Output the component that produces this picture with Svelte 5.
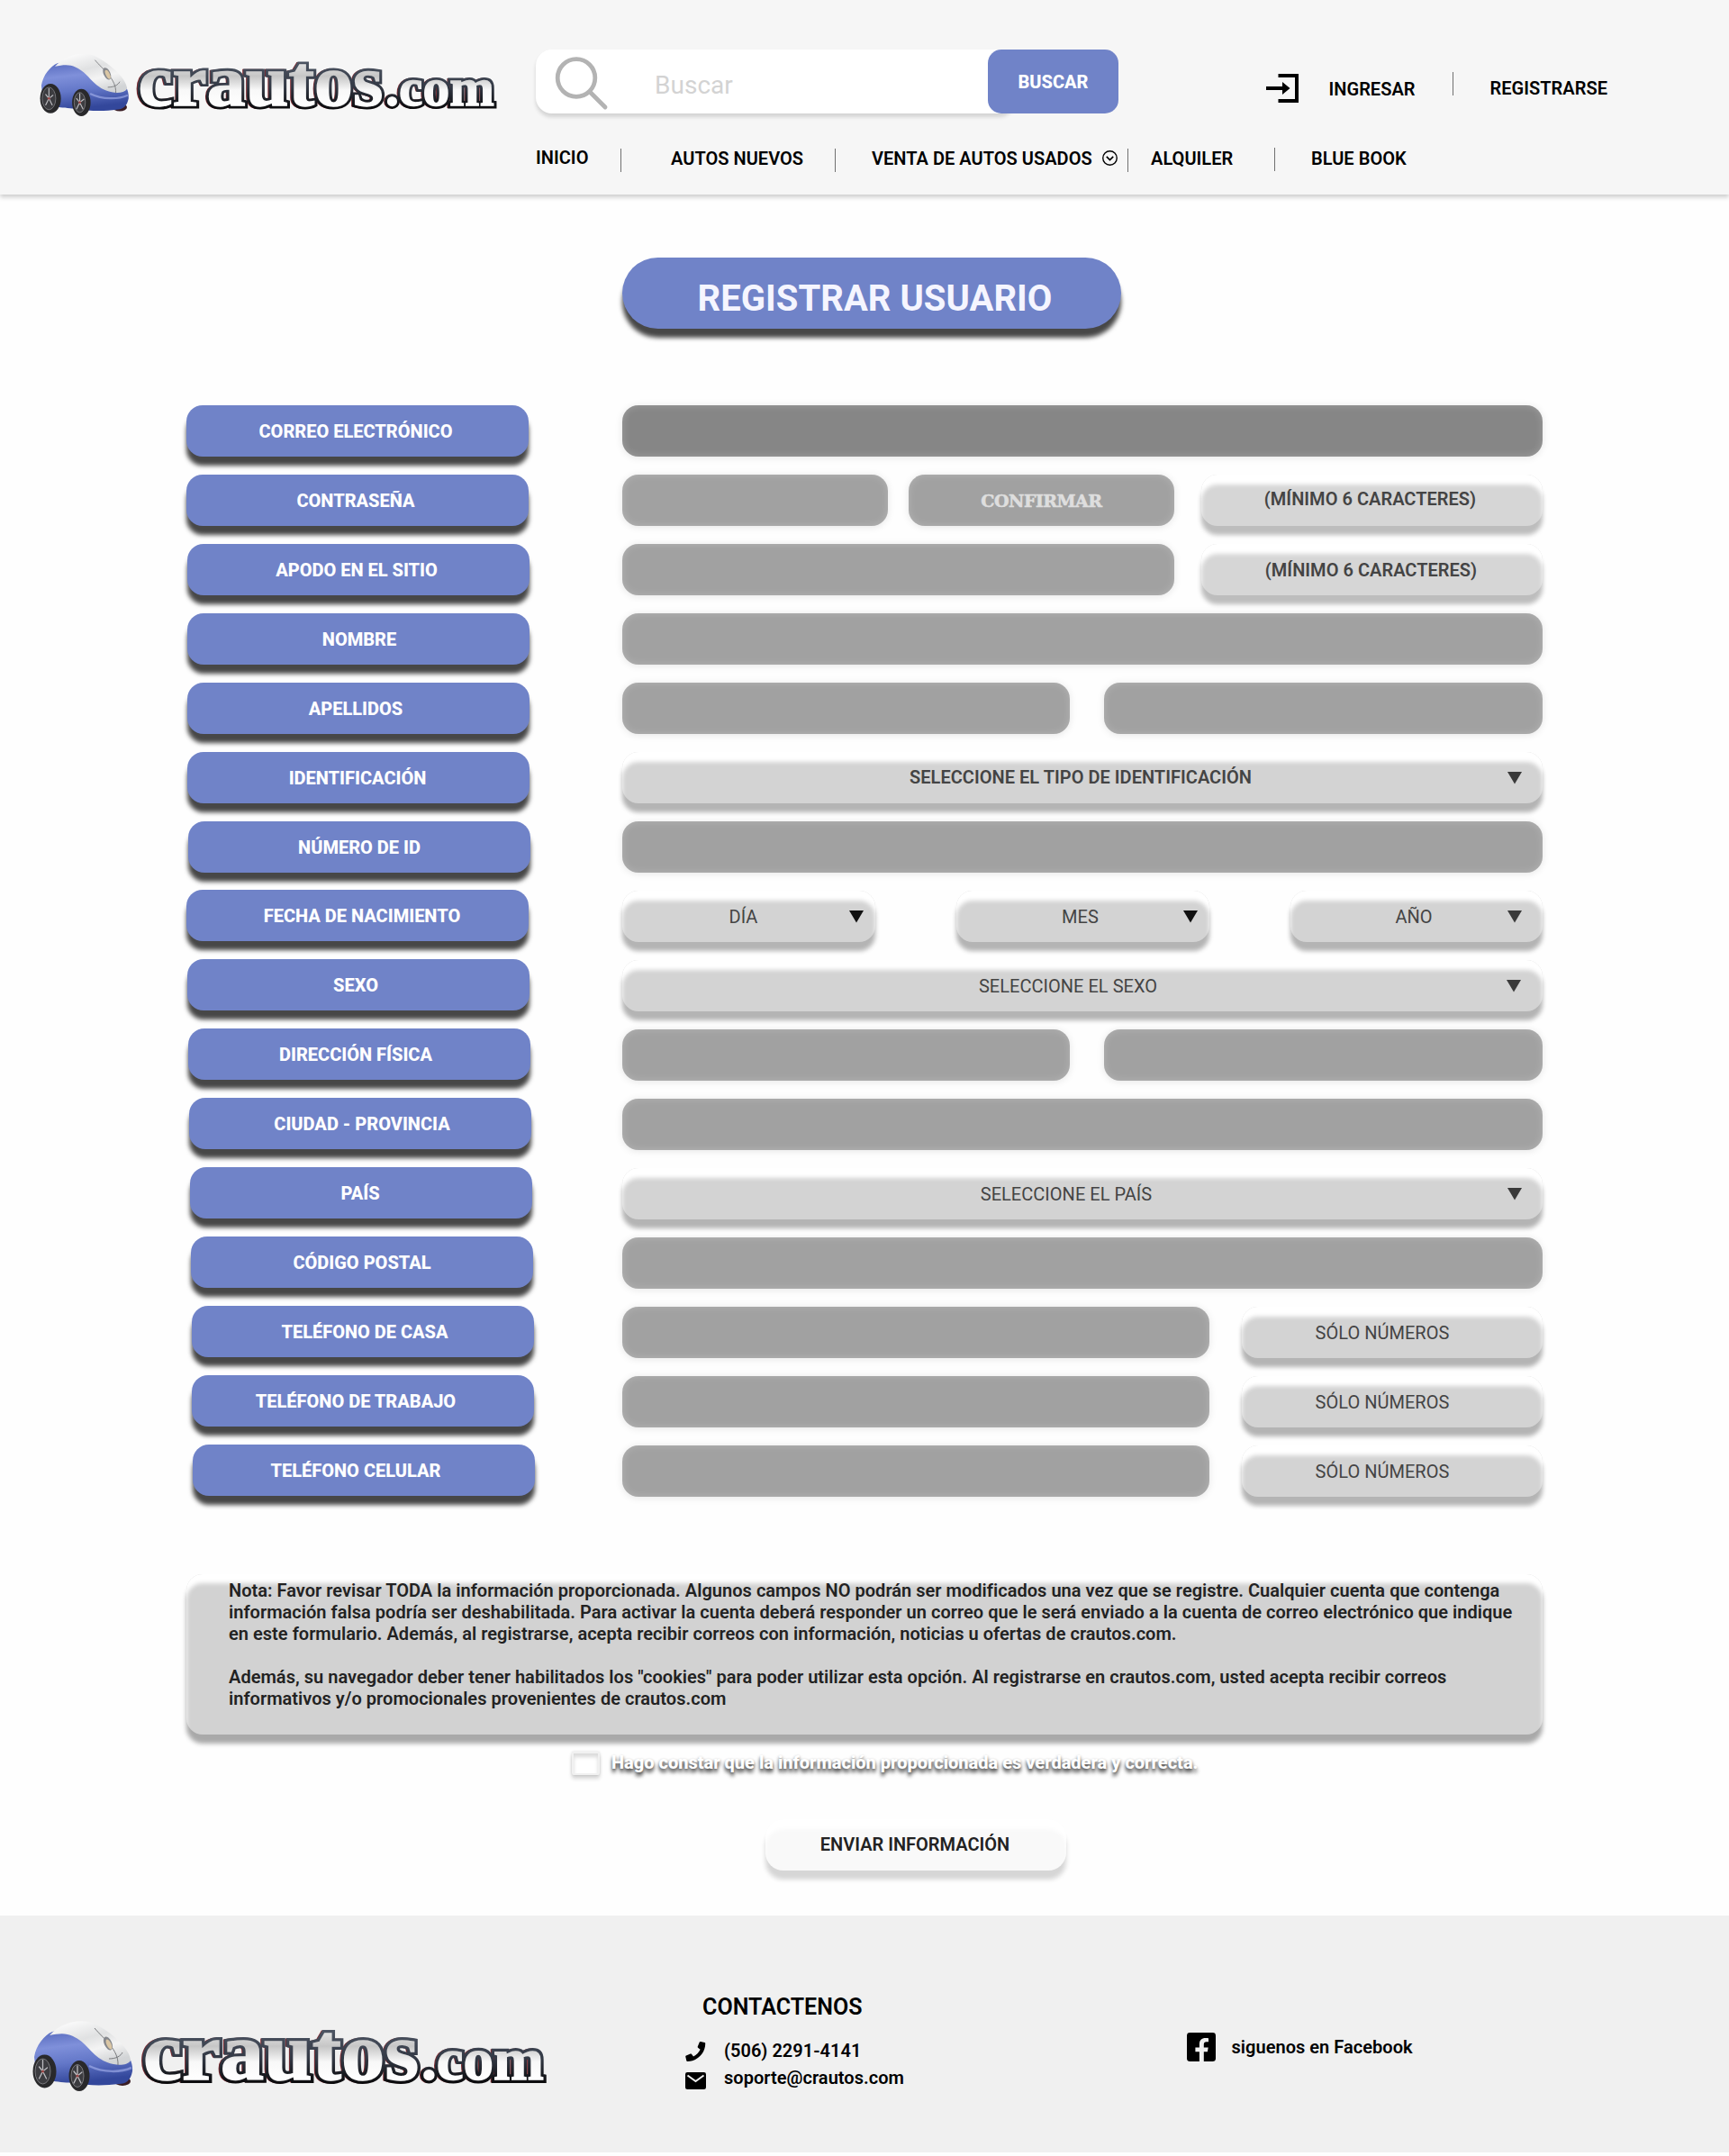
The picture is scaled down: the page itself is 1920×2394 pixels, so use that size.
<script>
  const pass = (gap, w, extra = {}) => ({ kind: 'input', gap, w, ...extra });
  const soft = (gap, w, text, extra = {}) => ({ kind: 'soft', gap, w, text, dx: 0, dy: 0, ...extra });

  const rows = [
    { label: 'CORREO ELECTRÓNICO', x: 0, dx: -2, fields: [pass(0, 1022, { dark: true })] },
    {
      label: 'CONTRASEÑA', x: 0, dx: -2,
      fields: [
        pass(0, 295),
        pass(23, 295, { text: 'CONFIRMAR' }),
        soft(30, 379, '(MÍNIMO 6 CARACTERES)', { dx: -2, dy: -2, strong: true, pale: true })
      ]
    },
    {
      label: 'APODO EN EL SITIO', x: 1, dx: -2,
      fields: [pass(0, 613), soft(30, 379, '(MÍNIMO 6 CARACTERES)', { dx: -1, strong: true, pale: true })]
    },
    { label: 'NOMBRE', x: 1, dx: 1, fields: [pass(0, 1022)] },
    { label: 'APELLIDOS', x: 1, dx: -3, fields: [pass(0, 497), pass(38, 487)] },
    {
      label: 'IDENTIFICACIÓN', x: 1, dx: -1,
      fields: [soft(0, 1022, 'SELECCIONE EL TIPO DE IDENTIFICACIÓN', { dx: -2, dy: -1, strong: true, arrow: 23 })]
    },
    { label: 'NÚMERO DE ID', x: 2, dx: 0, fields: [pass(0, 1022)] },
    {
      label: 'FECHA DE NACIMIENTO', x: 0, dx: 5, up: true,
      fields: [
        soft(0, 281, 'DÍA', { dx: -6, arrow: 13, black: true }),
        soft(90, 281, 'MES', { dx: -3, arrow: 13, black: true }),
        soft(90, 280, 'AÑO', { dx: -3, arrow: 23 })
      ]
    },
    { label: 'SEXO', x: 1, dx: -3, up: true, fields: [soft(0, 1022, 'SELECCIONE EL SEXO', { dx: -16, arrow: 24 })] },
    { label: 'DIRECCIÓN FÍSICA', x: 2, dx: -4, up: true, fields: [pass(0, 497), pass(38, 487)] },
    { label: 'CIUDAD - PROVINCIA', x: 3, dx: 2, up: true, fields: [pass(0, 1022)] },
    { label: 'PAÍS', x: 4, dx: -1, up: true, fields: [soft(0, 1022, 'SELECCIONE EL PAÍS', { dx: -18, arrow: 23 })] },
    { label: 'CÓDIGO POSTAL', x: 5, dx: 0, up: true, fields: [pass(0, 1022)] },
    { label: 'TELÉFONO DE CASA', x: 6, dx: 2, up: true, fields: [pass(0, 652), soft(36, 334, 'SÓLO NÚMEROS', { dx: -11 })] },
    { label: 'TELÉFONO DE TRABAJO', x: 6, dx: -8, up: true, fields: [pass(0, 652), soft(36, 334, 'SÓLO NÚMEROS', { dx: -11 })] },
    { label: 'TELÉFONO CELULAR', x: 7, dx: -9, up: true, fields: [pass(0, 652), soft(36, 334, 'SÓLO NÚMEROS', { dx: -11 })] }
  ];
</script>

{#snippet wheel(cx, cy, rx, ry)}
  <ellipse {cx} {cy} {rx} {ry} fill="#29292b" />
  <ellipse cx={cx - 2} {cy} rx={rx - 4.5} ry={ry - 4.5} fill="#3c3c40" stroke="#8a8a8e" stroke-width="0.8" />
  <path
    d="M{cx - 2} {cy}V{cy - ry + 6}M{cx - 2} {cy}l5 -4M{cx - 2} {cy}l4 8M{cx - 2} {cy}l-4 8M{cx - 2} {cy}l-4 -5"
    stroke="#bdbdc1"
    stroke-width="1.3"
    stroke-linecap="round"
  />
  <circle cx={cx - 2} {cy} r="1.6" fill="#9a4545" />
{/snippet}

{#snippet logo(id)}
  <svg class="logo" viewBox="0 0 576 88" role="img" aria-label="crautos.com">
    <defs>
      <linearGradient id="{id}-body" x1="0" y1="0" x2="0.2" y2="1">
        <stop offset="0" stop-color="#4f63b8" />
        <stop offset="0.35" stop-color="#7f90da" />
        <stop offset="0.65" stop-color="#6377c8" />
        <stop offset="1" stop-color="#33479b" />
      </linearGradient>
      <linearGradient id="{id}-shell" x1="0.1" y1="0" x2="0.6" y2="1">
        <stop offset="0" stop-color="#ffffff" />
        <stop offset="0.45" stop-color="#e0e1e2" />
        <stop offset="0.7" stop-color="#f4f4f4" />
        <stop offset="1" stop-color="#d2d4d6" />
      </linearGradient>
      <linearGradient id="{id}-big" gradientUnits="userSpaceOnUse" x1="0" y1="16" x2="0" y2="70">
        <stop offset="0" stop-color="#e2e2e2" />
        <stop offset="0.3" stop-color="#c6c6c6" />
        <stop offset="0.62" stop-color="#f8f8f8" />
        <stop offset="1" stop-color="#ffffff" />
      </linearGradient>
      <linearGradient id="{id}-edge" gradientUnits="userSpaceOnUse" x1="0" y1="14" x2="0" y2="72">
        <stop offset="0" stop-color="#4d5563" />
        <stop offset="0.55" stop-color="#323844" />
        <stop offset="1" stop-color="#0c0c0e" />
      </linearGradient>
    </defs>
    <ellipse cx="99" cy="71" rx="9" ry="5" fill="#3a1d24" />
    <path d="M1 44C3 31 12 20 21 16C45 10 70 12 90 28C104 38 111 48 110 60C108 70 103 74 95 74C80 76 60 76 46 73C30 72 12 72 3 60Z" fill="url(#{id}-body)" />
    <path d="M18 20C32 5 52 1 68 7C88 17 108 36 108 48C104 54 92 54 82 50C64 43 60 28 44 21C36 17 28 18 18 20Z" fill="url(#{id}-shell)" />
    <path d="M62 54C78 62 98 61 109 56" fill="none" stroke="#a8b4ee" stroke-width="2.500" opacity="0.6" />
    <path d="M68 12C78 24 95 36 94 53M84 46C92 46 97 43 99 39" fill="none" stroke="#77787b" stroke-width="1" />
    <ellipse cx="83" cy="29" rx="4.200" ry="8" transform="rotate(-25 83 29)" fill="#86888d" />
    <ellipse cx="84" cy="30" rx="2.500" ry="6" transform="rotate(-25 84 30)" fill="#dac6a4" />
    {@render wheel(12.5, 60, 13, 18.5)}
    {@render wheel(51, 65, 11.5, 17)}
    <g class="word" stroke-linejoin="miter" stroke-miterlimit="3">
      <g fill="#7d2a30" stroke="#7d2a30" stroke-width="7" transform="translate(-1.5 0)">
        <text x="122" y="69" font-size="90" textLength="306" lengthAdjust="spacingAndGlyphs">crautos</text>
        <text x="431" y="69" font-size="66" textLength="136" lengthAdjust="spacingAndGlyphs">.com</text>
      </g>
      <g fill="url(#{id}-edge)" stroke="url(#{id}-edge)" stroke-width="8">
        <text x="122" y="69" font-size="90" textLength="306" lengthAdjust="spacingAndGlyphs">crautos</text>
        <text x="431" y="69" font-size="66" textLength="136" lengthAdjust="spacingAndGlyphs">.com</text>
      </g>
      <g fill="url(#{id}-big)" stroke="url(#{id}-big)" stroke-width="1.5">
        <text x="122" y="69" font-size="90" textLength="306" lengthAdjust="spacingAndGlyphs">crautos</text>
        <text x="431" y="69" font-size="66" textLength="136" lengthAdjust="spacingAndGlyphs">.com</text>
      </g>
    </g>
  </svg>
{/snippet}

<div class="page">
  <header class="top">
    <div class="brand">{@render logo('head')}</div>
    <div class="top-main">
      <div class="top-row">
        <div class="search">
          <div class="search-box">
            <svg class="lens" viewBox="0 0 60 60">
              <circle cx="24" cy="23.500" r="20.800" fill="none" stroke="#b3b3b3" stroke-width="4.800" />
              <path d="M39 39L56 56" stroke="#b3b3b3" stroke-width="4.800" stroke-linecap="round" />
            </svg>
            <span class="placeholder">Buscar</span>
          </div>
          <button class="search-btn">BUSCAR</button>
        </div>
        <div class="account">
          <svg class="login" viewBox="0 0 36 32">
            <path d="M13.500 2H34V30H13.500" fill="none" stroke="#000" stroke-width="4" />
            <path d="M0 14H18V9L26.500 16L18 23V18H0Z" />
          </svg>
          <a class="ingresar">INGRESAR</a>
          <i class="rule"></i>
          <a class="registrarse">REGISTRARSE</a>
        </div>
      </div>
      <nav>
        <a class="up">INICIO</a>
        <i class="rule"></i>
        <a>AUTOS NUEVOS</a>
        <i class="rule"></i>
        <a>VENTA DE AUTOS USADOS</a>
        <svg class="chev" viewBox="0 0 16 16" fill="none" stroke="#000" stroke-width="1.300">
          <circle cx="8" cy="8" r="7.300" />
          <path d="M4.500 6.500L8 10L11.500 6.500" stroke-width="1.600" />
        </svg>
        <i class="rule"></i>
        <a>ALQUILER</a>
        <i class="rule raised"></i>
        <a>BLUE BOOK</a>
      </nav>
    </div>
  </header>

  <main>
    <h1>REGISTRAR USUARIO</h1>

    <div class="form">
      {#each rows as row}
        <div class="row">
          <div class="label-cell">
            <div class="label" class:lifted={row.up} style="margin-left: {row.x}px">
              <span style="translate: {row.dx}px">{row.label}</span>
            </div>
          </div>
          <div class="fields">
            {#each row.fields as f}
              <div
                class={f.kind}
                class:dark={f.dark}
                class:pale={f.pale}
                style="width: {f.w}px; margin-left: {f.gap}px"
              >
                {#if f.kind === 'input'}
                  {#if f.text}<span class="hint">{f.text}</span>{/if}
                {:else}
                  <span class="text" class:strong={f.strong} style="translate: {f.dx}px {f.dy}px">{f.text}</span>
                  {#if f.arrow}
                    <svg class="arrow" class:black={f.black} viewBox="0 0 16 14" style="margin-right: {f.arrow}px">
                      <path d="M0 0H16L8 13.500Z" />
                    </svg>
                  {/if}
                {/if}
              </div>
            {/each}
          </div>
        </div>
      {/each}
    </div>

    <section class="note">
      Nota: Favor revisar TODA la información proporcionada. Algunos campos NO podrán ser modificados una vez que se registre. Cualquier cuenta que contenga<br />
      información falsa podría ser deshabilitada. Para activar la cuenta deberá responder un correo que le será enviado a la cuenta de correo electrónico que indique<br />
      en este formulario. Además, al registrarse, acepta recibir correos con información, noticias u ofertas de crautos.com.<br />
      <br />
      Además, su navegador deber tener habilitados los "cookies" para poder utilizar esta opción. Al registrarse en crautos.com, usted acepta recibir correos<br />
      informativos y/o promocionales provenientes de crautos.com
    </section>

    <div class="confirm">
      <span class="box"></span>
      <span class="confirm-text">Hago constar que la información proporcionada es verdadera y correcta.</span>
    </div>

    <button class="send"><span>ENVIAR INFORMACIÓN</span></button>
  </main>

  <footer>
    <div class="foot-brand">{@render logo('foot')}</div>
    <div class="contact">
      <h2>CONTACTENOS</h2>
      <div class="line">
        <svg viewBox="0 0 512 512" class="phone">
          <path d="M493.400 24.600l-104-24c-11.300-2.600-22.900 3.300-27.500 13.900l-48 112c-4.200 9.800-1.400 21.300 6.900 28l60.600 49.600c-36 76.700-98.900 140.500-177.200 177.200l-49.600-60.600c-6.800-8.300-18.200-11.100-28-6.900l-112 48C3.900 366.500-2 378.100.6 389.400l24 104C27.100 504.200 36.700 512 48 512c256.100 0 464-207.500 464-464 0-11.200-7.700-20.900-18.600-23.400z" />
        </svg>
        <span>(506) 2291-4141</span>
      </div>
      <div class="line mail-line">
        <svg viewBox="0 0 23 19" class="mail">
          <rect width="23" height="19" rx="2.300" />
          <path d="M2.500 3.500L11.500 10L20.500 3.500" fill="none" stroke="#f0f0f0" stroke-width="2" />
        </svg>
        <span>soporte@crautos.com</span>
      </div>
    </div>
    <div class="social">
      <svg viewBox="0 0 32 32">
        <path d="M3.400 0H28.600A3.400 3.400 0 0 1 32 3.400V28.600A3.400 3.400 0 0 1 28.600 32H18.800V21.200H22.900L23.700 16.600H18.800V13.300C18.800 11.500 19.600 10.300 21.800 10.300H24V6.300C23 6.100 21.900 6 20.600 6C16.500 6 13.900 8.400 13.900 12.700V16.600H9.400V21.200H13.900V32H3.400A3.400 3.400 0 0 1 0 28.600V3.400A3.400 3.400 0 0 1 3.400 0Z" />
      </svg>
      <span>siguenos en Facebook</span>
    </div>
  </footer>
</div>

<style>
  :global(body) {
    background: #fff;
  }
  .page {
    width: 1920px;
    height: 2394px;
    background: #fefefe;
    font: 600 20px/24px Roboto, sans-serif;
    letter-spacing: 0.03px;
    color: #000;
    display: flex;
    flex-direction: column;
    overflow: hidden;
  }
  a,
  span,
  h1,
  h2,
  button {
    white-space: nowrap;
  }
  button {
    font: inherit;
    border: 0;
    padding: 0;
  }
  .logo {
    display: block;
    width: 100%;
    overflow: visible;
  }
  .word {
    font-family: 'Liberation Serif', serif;
    font-weight: 700;
  }

  .top {
    height: 216px;
    flex: none;
    background: #f6f6f6;
    box-shadow: 0 3px 5px rgba(0, 0, 0, 0.2);
    display: grid;
    grid-template-columns: 595px 1fr;
  }
  .brand {
    width: 512px;
    margin: 56px 0 0 45px;
  }
  .top-main {
    padding-top: 55px;
  }
  .top-row {
    display: flex;
    height: 71px;
  }
  .search {
    display: flex;
    width: 647px;
  }
  .search-box {
    width: 532px;
    flex: none;
    display: flex;
    background: #fff;
    border-radius: 18px;
    box-shadow: 0 4px 4px rgba(0, 0, 0, 0.14);
  }
  .lens {
    width: 60px;
    height: 60px;
    margin: 7.5px 0 0 21px;
  }
  .placeholder {
    font-weight: 400;
    font-size: 28px;
    line-height: 32px;
    color: #d3d3d3;
    margin: 24px 0 0 51px;
  }
  .search-btn {
    width: 145px;
    flex: none;
    margin-left: -30px;
    border-radius: 15px;
    background: #7083c8;
    color: #fff;
    font-weight: 800;
    z-index: 1;
  }
  .account {
    display: grid;
    grid-template-columns: 69.5px 137px 42px auto;
    padding-left: 164px;
    align-items: start;
  }
  .login {
    width: 36px;
    height: 32px;
    margin-top: 27px;
  }
  .ingresar {
    margin-top: 32px;
  }
  .registrarse {
    margin-top: 31px;
  }
  .rule {
    width: 1px;
    height: 26px;
    background: #707070;
  }
  .account .rule {
    margin-top: 25px;
  }
  nav {
    display: grid;
    grid-template-columns: 94px 56px 182px 41px 256px 28px 26px 137px 41px auto;
    justify-content: start;
    align-items: start;
    padding-top: 38px;
  }
  nav .rule {
    margin-top: 1px;
  }
  nav .rule.raised {
    margin-top: 0;
  }
  nav .up {
    margin-top: -1px;
  }
  .chev {
    width: 17px;
    height: 17px;
    margin-top: 3px;
  }

  main {
    display: flex;
    flex-direction: column;
    height: 1911px;
  }
  h1 {
    width: 554px;
    height: 79px;
    box-sizing: border-box;
    margin: 70px 0 0 691px;
    border-radius: 40px;
    padding: 22px 0 0 7px;
    background: #7083c8;
    color: #f5f5ff;
    font-size: 40px;
    line-height: 48px;
    font-weight: 700;
    text-align: center;
    box-shadow: 0 10px 5px #474747;
  }
  .form {
    display: grid;
    grid-template-rows: repeat(16, 57px);
    row-gap: 20px;
    margin: 85px 0 0 207px;
  }
  .row {
    display: grid;
    grid-template-columns: 484px 1022px;
  }
  .label {
    width: 380px;
    height: 57px;
    border-radius: 18px;
    background: #7083c8;
    box-shadow: 0 10px 5px #474747;
    color: #fff;
    font-weight: 800;
    letter-spacing: 0;
    line-height: 58px;
    text-align: center;
  }
  .label.lifted {
    margin-top: -1px;
  }
  .label span {
    display: block;
  }
  .fields {
    display: flex;
  }
  .input,
  .soft {
    flex: none;
    height: 57px;
    border-radius: 18px;
    text-align: center;
    line-height: 58px;
  }
  .input {
    background: #a1a1a1;
    box-shadow:
      inset 0 0 10px rgba(255, 255, 255, 0.2),
      0 1px 9px rgba(0, 0, 0, 0.1);
  }
  .input.dark {
    background: #868686;
  }
  .hint {
    font: 700 19px/58px 'DejaVu Serif', serif;
    letter-spacing: -0.5px;
    color: #dedede;
    -webkit-text-stroke: 0.6px #dedede;
  }
  .soft {
    display: grid;
    background: #d3d3d3;
    box-shadow:
      inset 0 11px 5px #fff,
      0 10px 5px #b4b4b4;
    color: #444;
  }
  .soft.pale {
    background: #d6d6d6;
    box-shadow:
      inset 0 11px 5px #fff,
      0 10px 5px #bdbdbd;
  }
  .text,
  .arrow {
    grid-area: 1 / 1;
  }
  .text {
    font-weight: 450;
  }
  .text.strong {
    font-weight: 570;
  }
  .arrow {
    width: 16px;
    height: 14px;
    margin-top: 22px;
    justify-self: end;
    fill: #3a3a3a;
  }
  .arrow.black {
    fill: #111;
  }

  .note {
    width: 1506px;
    height: 178px;
    box-sizing: border-box;
    margin: 86px 0 0 207px;
    padding: 6px 0 0 47px;
    border-radius: 18px;
    background: #d2d2d2;
    box-shadow:
      inset 0 10px 5px #fff,
      0 10px 5px #a9a9a9;
    color: #222;
    white-space: nowrap;
  }
  .confirm {
    display: flex;
    margin: 19px 0 0 635px;
  }
  .box {
    width: 31px;
    height: 26px;
    box-sizing: border-box;
    border: 2px solid #f1f1f1;
    border-radius: 2px;
    background: #fff;
    box-shadow:
      inset 0 4px 4px rgba(0, 0, 0, 0.15),
      0 0 3px rgba(0, 0, 0, 0.15),
      0 4px 4px rgba(0, 0, 0, 0.16);
  }
  .confirm-text {
    margin: 0 0 0 13px;
    font-weight: 800;
    letter-spacing: 0;
    color: #fff;
    text-shadow:
      0 4px 4px rgba(0, 0, 0, 0.75),
      0 1px 3px rgba(0, 0, 0, 0.3);
  }
  .send {
    width: 334px;
    height: 57px;
    margin: 49px 0 0 850px;
    border-radius: 20px;
    background: #f9f9f9;
    box-shadow:
      inset 0 11px 5px #fff,
      0 10px 5px #d6d6d6;
    color: #222;
    font-weight: 600;
  }
  .send span {
    display: block;
    translate: -1px -1px;
  }

  footer {
    height: 263px;
    flex: none;
    background: #f0f0f0;
    display: grid;
    grid-template-columns: 761px 557px auto;
    align-items: start;
  }
  .foot-brand {
    width: 576px;
    margin: 113px 0 0 37px;
  }
  .contact {
    padding-top: 87px;
  }
  h2 {
    margin: 0 0 0 19px;
    font-size: 25px;
    line-height: 30px;
    font-weight: 600;
  }
  .line {
    display: grid;
    grid-template-columns: 43px auto;
    margin-top: 21px;
  }
  .phone {
    width: 22.5px;
    height: 22px;
    margin-top: 2px;
  }
  .mail-line {
    margin-top: 6px;
  }
  .mail {
    width: 23px;
    height: 19px;
    margin-top: 6px;
  }
  .social {
    display: grid;
    grid-template-columns: 49.5px auto;
    padding-top: 130px;
  }
  .social svg {
    width: 32px;
    height: 32px;
  }
  .social span {
    margin-top: 4px;
  }
</style>
